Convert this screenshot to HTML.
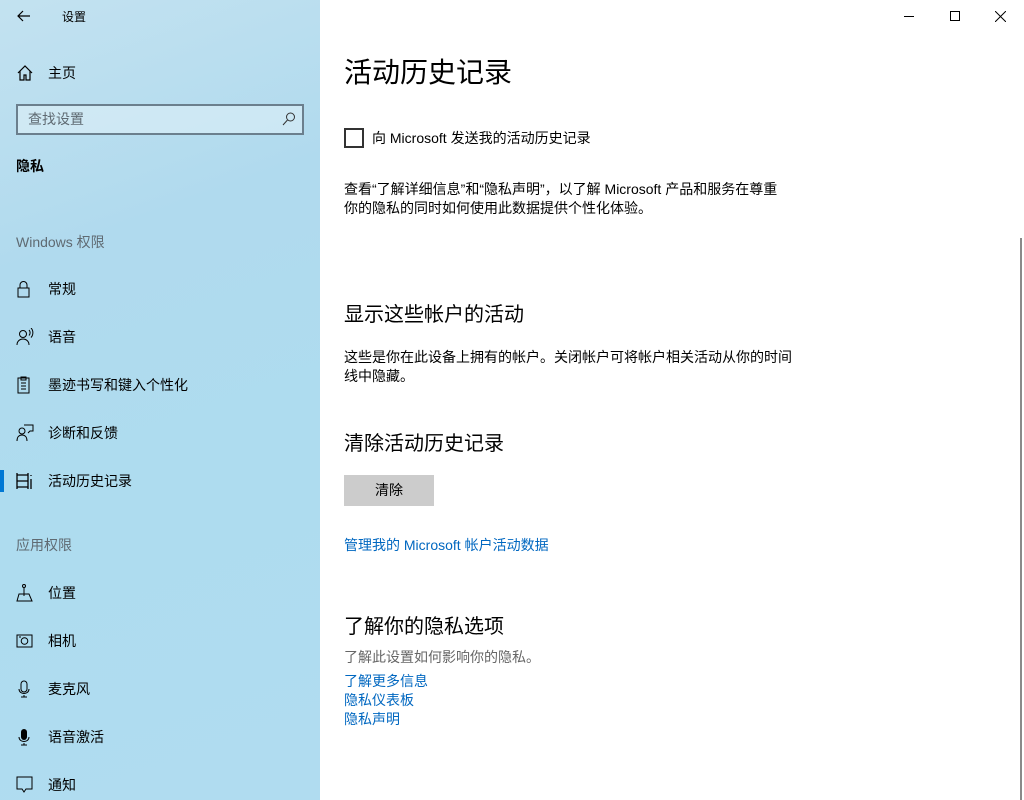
<!DOCTYPE html><html><head><meta charset="utf-8"><style>
*{margin:0;padding:0;box-sizing:border-box}
body{width:1024px;height:800px;overflow:hidden;position:relative;background:#fff;font-family:"Liberation Sans","Noto Sans CJK SC",sans-serif;color:#000}
.sb{position:absolute;left:0;top:0;width:320px;height:800px;background:linear-gradient(160deg,#c3e2f0 0%,#b0daee 30%,#aedcef 60%,#b0dcf0 100%)}
.a{position:absolute;white-space:nowrap;line-height:1}
.t{font-size:14px;transform:translateY(-50%)}
.ic{position:absolute;left:16px;width:18px;height:18px}
.g{color:#5f6a72}
.lk{color:#0067c0}
</style></head><body>
<div class="sb"></div>
<svg class="a" style="left:16px;top:9px" width="16" height="14"><path d="M14 7H2M7 2L2 7l5 5" stroke="#000" fill="none" stroke-width="1.2"/></svg>
<div class="a" style="left:62px;top:17px;font-size:12px;transform:translateY(-50%)">设置</div>
<svg class="ic" style="top:64px" viewBox="0 0 18 18"><path d="M2 9L9 2l7 7M4 7v9h4v-5h2v5h4V7" stroke="#000" fill="none" stroke-width="1.2"/></svg>
<div class="a t" style="left:48px;top:73px">主页</div>
<div class="a" style="left:16px;top:104px;width:288px;height:31px;border:2px solid #6b7f8d;background:rgba(230,244,250,.5)"></div>
<div class="a t g" style="left:28px;top:119px">查找设置</div>
<svg class="a" style="left:282px;top:111px" width="14" height="16"><circle cx="8.5" cy="6" r="4" stroke="#333" fill="none"/><path d="M5.5 9L1 14" stroke="#333"/></svg>
<div class="a t" style="left:16px;top:166px;font-weight:bold">隐私</div>
<div class="a t g" style="left:16px;top:242px">Windows 权限</div>
<svg class="ic" style="top:280px" viewBox="0 0 18 18"><rect x="2" y="8" width="11" height="9" stroke="#000" fill="none"/><path d="M4 8V5a3.5 3.5 0 017 0v3" stroke="#000" fill="none"/></svg>
<div class="a t" style="left:48px;top:289px">常规</div>
<svg class="ic" style="top:328px" viewBox="0 0 18 18"><circle cx="7" cy="6" r="3.5" stroke="#000" fill="none"/><path d="M1 17c0-4 3-6 6-6s6 2 6 6M13 2c1.5 1.5 1.5 4 0 5.5M15 0c2.5 2.5 2.5 7 0 9.5" stroke="#000" fill="none"/></svg>
<div class="a t" style="left:48px;top:337px">语音</div>
<svg class="ic" style="top:376px" viewBox="0 0 18 18"><rect x="2" y="2" width="11" height="15" stroke="#000" fill="none"/><path d="M5 1h5v3H5zM5 7h5M5 10h5M5 13h5" stroke="#000" fill="none"/></svg>
<div class="a t" style="left:48px;top:385px">墨迹书写和键入个性化</div>
<svg class="ic" style="top:424px" viewBox="0 0 18 18"><circle cx="6" cy="7" r="3" stroke="#000" fill="none"/><path d="M1 17c0-4 2-6 5-6s5 2 5 6M8 1h9v6h-3l-2 2" stroke="#000" fill="none"/></svg>
<div class="a t" style="left:48px;top:433px">诊断和反馈</div>
<div class="a" style="left:0;top:470px;width:4px;height:22px;background:#0078d4"></div>
<svg class="ic" style="top:472px" viewBox="0 0 18 18"><path d="M1 1v16M12 1v16M1 3h11M1 15h11M1 9h11M15 3v1M15 7v10" stroke="#000" fill="none" stroke-width="1.3"/></svg>
<div class="a t" style="left:48px;top:481px">活动历史记录</div>
<div class="a t g" style="left:16px;top:545px">应用权限</div>
<svg class="ic" style="top:584px" viewBox="0 0 18 18"><circle cx="8" cy="2" r="1.5" stroke="#000" fill="none"/><path d="M8 4v8M1 17h15L13 10H3zM8 12" stroke="#000" fill="none"/></svg>
<div class="a t" style="left:48px;top:593px">位置</div>
<svg class="ic" style="top:632px" viewBox="0 0 18 18"><rect x="1" y="3" width="15" height="12" stroke="#000" fill="none"/><circle cx="8.5" cy="9" r="3.3" stroke="#000" fill="none"/><path d="M3 5h2" stroke="#000"/></svg>
<div class="a t" style="left:48px;top:641px">相机</div>
<svg class="ic" style="top:680px" viewBox="0 0 18 18"><rect x="5" y="1" width="6" height="11" rx="3" stroke="#000" fill="none"/><path d="M3 9c0 6 10 6 10 0M8 15v2M5 17h6" stroke="#000" fill="none"/></svg>
<div class="a t" style="left:48px;top:689px">麦克风</div>
<svg class="ic" style="top:728px" viewBox="0 0 18 18"><rect x="5" y="1" width="6" height="11" rx="3" fill="#000"/><path d="M3 9c0 6 10 6 10 0M8 15v2M5 17h6" stroke="#000" fill="none"/></svg>
<div class="a t" style="left:48px;top:737px">语音激活</div>
<svg class="ic" style="top:776px" viewBox="0 0 18 18"><path d="M1 1h15v12H10l-2 3-2-3H1z" stroke="#000" fill="none"/></svg>
<div class="a t" style="left:48px;top:785px">通知</div>

<div class="a" style="left:904px;top:16px;width:10px;height:1px;background:#000"></div>
<div class="a" style="left:950px;top:11px;width:10px;height:10px;border:1px solid #000"></div>
<svg class="a" style="left:995px;top:11px" width="11" height="11"><path d="M0 0l11 11M11 0L0 11" stroke="#000"/></svg>
<div class="a" style="left:1020px;top:238px;width:2px;height:562px;background:#8a8a8a"></div>

<div class="a" style="left:344px;top:73px;font-size:28px;transform:translateY(-50%)">活动历史记录</div>
<div class="a" style="left:344px;top:128px;width:20px;height:20px;border:2px solid #333"></div>
<div class="a t" style="left:372px;top:138px">向 Microsoft 发送我的活动历史记录</div>
<div class="a" style="left:344px;top:180px;font-size:14px;line-height:19px">查看“了解详细信息”和“隐私声明”，以了解 Microsoft 产品和服务在尊重<br>你的隐私的同时如何使用此数据提供个性化体验。</div>
<div class="a" style="left:344px;top:315px;font-size:20px;transform:translateY(-50%)">显示这些帐户的活动</div>
<div class="a" style="left:344px;top:348px;font-size:14px;line-height:19px">这些是你在此设备上拥有的帐户。关闭帐户可将帐户相关活动从你的时间<br>线中隐藏。</div>
<div class="a" style="left:344px;top:444px;font-size:20px;transform:translateY(-50%)">清除活动历史记录</div>
<div class="a" style="left:344px;top:475px;width:90px;height:31px;background:#cccccc;font-size:14px;line-height:31px;text-align:center">清除</div>
<div class="a t lk" style="left:344px;top:545px">管理我的 Microsoft 帐户活动数据</div>
<div class="a" style="left:344px;top:627px;font-size:20px;transform:translateY(-50%)">了解你的隐私选项</div>
<div class="a t" style="left:344px;top:657px;color:#666">了解此设置如何影响你的隐私。</div>
<div class="a t lk" style="left:344px;top:681px">了解更多信息</div>
<div class="a t lk" style="left:344px;top:700px">隐私仪表板</div>
<div class="a t lk" style="left:344px;top:719px">隐私声明</div>
</body></html>
